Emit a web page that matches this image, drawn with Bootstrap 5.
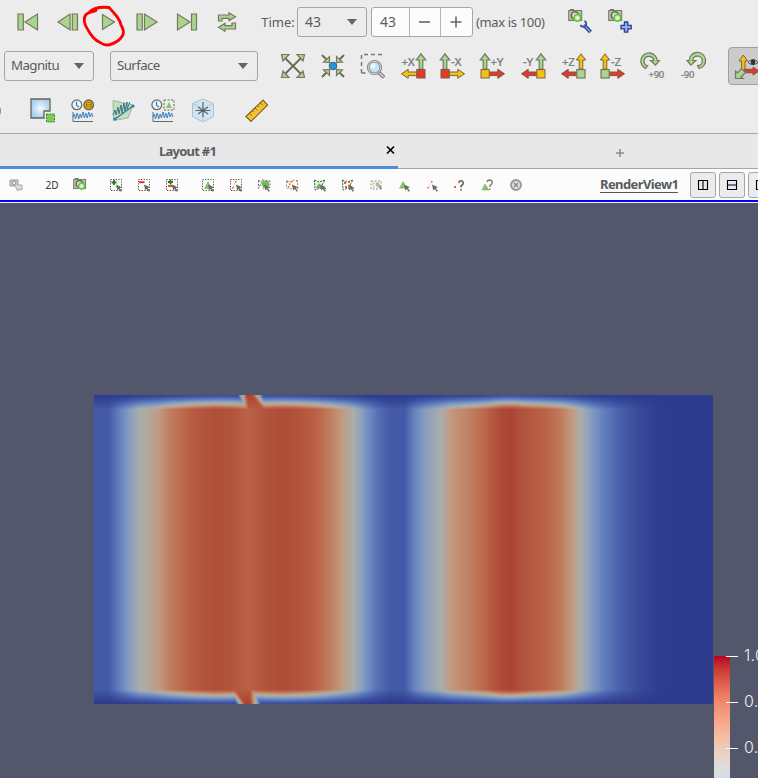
<!DOCTYPE html>
<html lang="en">
<head>
<meta charset="utf-8">
<title>Layout #1</title>
<link href="https://cdn.jsdelivr.net/npm/bootstrap@5.3.0/dist/css/bootstrap.min.css" rel="stylesheet">
<style>
body{font-family:"Noto Sans",sans-serif;font-size:13px;line-height:1;color:#585c5e;background:#ececec;width:758px;height:778px;overflow:hidden}
svg{display:block;flex:none;overflow:visible}
.tool-row{height:44px}
.row-tall{height:46px;border-bottom:1px solid #a6a6a6}
.slot{width:40px;flex:none;display:flex;justify-content:center;align-items:center}
.play .slot{width:39.8px}
.box{border:1px solid #a5a5a5;border-radius:3px;height:30px;flex:none;font-size:14px}
.combo{font-size:13.3px;letter-spacing:-.6px}
.spin{background:#fcfcfc}
.spin>*{height:100%}
.cell{border-left:1px solid #b5b5b5;width:31px}
.toggle{width:40px;height:38px;border:1px solid #a0a0a0;background:#cbcbcb;border-radius:4px 0 0 4px;flex:none}
.tabs{height:35px;background:#e8e8e8}
.tab1{width:398px;border-bottom:3px solid #4a90d9;font-size:13px;font-weight:700;color:#595d5f;letter-spacing:-.75px}
.tab2{border-bottom:1px solid #a6a6a6}
.views{height:31px;background:#fcfcfc}
.views .slot{width:28px}
.gap8{width:8px;flex:none}
.vbtn{width:26px;height:26px;border:1px solid #a6a6a6;border-radius:3px;background:#ececec;flex:none}
.active-line{height:3px;background:linear-gradient(#00f 0 2px,#f4f4f4 2px)}
.scene{height:575px;background:#52576c;padding-top:192px;overflow:hidden}
.scene canvas{margin-left:94px;flex:none}
.legend-bar{width:16px;height:122px;margin:261px 0 0 1px;flex:none;background:linear-gradient(#b40426 0,#c32d30 9px,#d65244 22px,#e8765c 36px,#f08a6c 46px,#f7a889 66px,#f5c1a9 84px,#ead3c6 98px,#dddddd 113px,#d5dbe5 122px)}
.legend-ticks{margin:255px 0 0 -4px;padding-top:6px;flex:none;font-family:Inter,"Liberation Sans",sans-serif;font-weight:300;color:#eee;font-size:16px;letter-spacing:.3px}
.tick{height:46px;align-items:flex-start}
.tick i{width:12px;height:1px;background:#fff;flex:none}
.tick span{margin:-9px 0 0 6px}
.mark-ring{position:absolute;left:0;top:0;pointer-events:none}
.g{fill:#a8d68f;stroke:#77775f;stroke-width:1.2}
.y{fill:#f8c00e;stroke:#77664a;stroke-width:1}
.r{fill:#e43a24;stroke:#77584c;stroke-width:1}
.n{fill:none;stroke:#6b6b58}
.dash{fill:none;stroke:#66665a;stroke-width:1;stroke-dasharray:2 1.5}
.ax{font:500 11.5px "Noto Sans",sans-serif;fill:#808080;stroke:#808080;stroke-width:.2;letter-spacing:-.3px}
.ax90{font-size:9.5px}
.rv{font-size:13px;letter-spacing:-.6px;border-bottom:1px solid #555;height:15px;margin-top:2px}
</style>
<script src="https://cdn.jsdelivr.net/npm/bootstrap@5.3.0/dist/js/bootstrap.bundle.min.js"></script>
</head>
<body class="position-relative">
<svg width="0" height="0" class="position-absolute"><defs>
<path id="up" d="M19.2 16V7H16.3L21 .8 25.7 7H22.8V16Z"/>
<path id="lf" d="M17 19H8.2V16.3L1.5 20.8 8.2 25.3V22.6H17Z"/>
<rect id="sq" x="16.8" y="16.6" width="8.2" height="8.4"/>
<path id="cur" d="M7 6.5 L13 9.3 10.8 10 13 13 11.8 13.8 9.7 11 8.2 12.4Z" fill="#66705c"/>
<path id="sel" fill="none" stroke="#4a4a42" stroke-dasharray="1.2 1.4" d="M1.5 1.5H12.5V12.5H1.5Z"/>
<g id="cam"><rect x=".7" y="1.5" width="13" height="10" fill="#b9bba4" stroke="#77776a"/><rect x="2" y="0" width="4" height="2" fill="#77776a"/><circle cx="7" cy="6.5" r="3.6" fill="#dddccc" stroke="#5c5c50" stroke-width="1.4"/><circle cx="9.4" cy="8.8" r="3.4" fill="#b9eba0" stroke="#62c436" stroke-width="1.5"/><path d="M8 8.8h3M9.5 7.4v3" stroke="#fff"/></g>
<path id="wave" d="M2 18l1.5-3 1 5 1.7-6 1.5 6 1.5-5 1.2 4 1.6-6 1.4 6 1.3-5 1.5 5 1.5-6 1.4 5 1.5-4 1.2 4" fill="none" stroke="#3684c4" stroke-width="1"/>
<g id="clock"><circle cx="5.8" cy="5.8" r="4.9" fill="#f3f7f8" stroke="#6b6b60" stroke-width="1.3"/><path d="M5.5 2.5v3.5l2.3 2.3" fill="none" stroke="#3684c4" stroke-width="1.3"/></g>
</defs></svg>

<div class="tool-row d-flex align-items-center">
 <div class="d-flex play" style="margin-left:8px">
  <div class="slot"><svg width="22" height="18"><path class="g" d="M1 1H6.3V17H1ZM20.5 1V17L8 9Z"/></svg></div>
  <div class="slot"><svg width="22" height="18"><path class="g" d="M13 1V17L1 9ZM15.3 1H20.5V17H15.3Z"/></svg></div>
  <div class="slot"><svg width="10" height="18"><path class="g" d="M.5 1.5V16.5L12.5 9Z"/></svg></div>
  <div class="slot"><svg width="22" height="18"><path class="g" d="M1 1H6.3V17H1ZM8.5 1V17L21 9Z"/></svg></div>
  <div class="slot"><svg width="20" height="18"><path class="g" d="M.5 1V17L13 9ZM14.5 1H19.5V17H14.5Z"/></svg></div>
  <div class="slot"><svg width="20" height="20"><path class="g" d="M1.5 9V3H12V.8L18.5 4.8 12 8.6V6.3H5V9ZM18.5 11V17H8V19.2L1.5 15.2 8 11.4V13.7H15V11Z"/></svg></div>
 </div>
 <span style="margin-left:14.5px;width:35.7px" class="flex-shrink-0">Time:</span>
 <div class="box d-flex align-items-center justify-content-between" style="width:70px;padding:0 9px 0 7px;margin-right:4px">43 <svg width="10" height="6"><path d="M0 0H10L5 6Z" fill="#656565"/></svg></div>
 <div class="box spin d-flex align-items-center" style="width:102px"><div class="d-flex align-items-center ps-2" style="width:37px">43</div>
  <div class="cell d-flex align-items-center justify-content-center"><svg width="11" height="12"><path d="M0 6H11" stroke="#666" stroke-width="1.6"/></svg></div>
  <div class="cell d-flex align-items-center justify-content-center"><svg width="12" height="12"><path d="M.5 6H11.5M6 .5V11.5" stroke="#666" stroke-width="1.6"/></svg></div></div>
 <span style="margin-left:3px;width:92px;letter-spacing:-.35px" class="flex-shrink-0 text-nowrap">(max is 100)</span>
 <svg width="26" height="26" style="margin-right:14px"><use href="#cam"/><path d="M16 16l6.5 7" stroke="#27408b" stroke-width="4"/><path d="M16 16l6.3 6.8" stroke="#7c9ce0" stroke-width="1.5"/><path d="M16.5 12a3 3 0 1 1-4 4" fill="none" stroke="#3c58a5" stroke-width="2"/></svg>
 <svg width="26" height="26"><use href="#cam"/><path d="M16.4 13h3.4v3.3h3.4v3.5h-3.4v3.3h-3.4v-3.3H13v-3.5h3.4Z" fill="#90aff0" stroke="#263f90" stroke-width="1.3"/></svg>
</div>

<div class="tool-row d-flex align-items-center">
 <div class="box combo d-flex align-items-center justify-content-between" style="width:90px;margin-left:4px;padding:0 9px 0 6px">Magnitu <svg width="10" height="6"><path d="M0 0H10L5 6Z" fill="#656565"/></svg></div>
 <div class="box combo d-flex align-items-center justify-content-between" style="width:148px;margin-left:16px;padding:0 9px 0 6px">Surface <svg width="10" height="6"><path d="M0 0H10L5 6Z" fill="#656565"/></svg></div>
 <div class="d-flex" style="margin-left:15px">
  <div class="slot"><svg width="26" height="26"><path d="M4 4L22 22M22 4L4 22" stroke="#6b6b50" stroke-width="1.8"/><path class="g" d="M1.5 1.5h7.5l-6 6.5ZM24.5 1.5h-7.5l6 6.5ZM1.5 24.5h7.5l-6-6.5ZM24.5 24.5h-7.5l6-6.5Z"/></svg></div>
  <div class="slot"><svg width="26" height="26"><path d="M2 2L8 8M24 2L18 8M2 24L8 18M24 24L18 18" stroke="#6b6b50" stroke-width="2"/><path class="g" d="M9.5 9.5V3.5L3.5 9ZM16.5 9.5V3.5L22.5 9ZM9.5 16.5V22.5L3.5 17ZM16.5 16.5V22.5L22.5 17Z"/><circle cx="13" cy="13" r="3.8" fill="#2196dc" stroke="#38617a"/></svg></div>
  <div class="slot"><svg width="26" height="26"><path d="M1.5 20V1.5H21V5M1.5 20H6" fill="none" stroke="#77776d" stroke-width="1.5" stroke-dasharray="4 3"/><path d="M18 18.5l6 6" stroke="#777" stroke-width="3.8"/><path d="M18.5 19l5 5" stroke="#ddd" stroke-width="1.5"/><circle cx="14.5" cy="14.5" r="6.3" fill="#c1e5f8" stroke="#858585" stroke-width="2.6"/><circle cx="14.5" cy="14.5" r="6.2" fill="none" stroke="#ddd" stroke-width=".9"/><circle cx="13" cy="12.8" r="2.5" fill="#e8f8ff"/></svg></div>
  <div class="slot"><svg width="26" height="26"><use href="#up" class="g"/><use href="#lf" class="y"/><use href="#sq" class="r"/><text class="ax" x="1.5" y="13">+X</text></svg></div>
  <div class="slot"><svg width="26" height="26"><g transform="matrix(-1 0 0 1 26 0)"><use href="#up" class="g"/><use href="#lf" class="y"/><use href="#sq" class="r"/></g><text class="ax" x="11" y="13">-X</text></svg></div>
  <div class="slot"><svg width="26" height="26"><g transform="matrix(-1 0 0 1 26 0)"><use href="#up" class="g"/><use href="#lf" class="r"/><use href="#sq" class="y"/></g><text class="ax" x="10.5" y="13">+Y</text></svg></div>
  <div class="slot"><svg width="26" height="26"><use href="#up" class="g"/><use href="#lf" class="r"/><use href="#sq" class="y"/><text class="ax" x="3" y="13">-Y</text></svg></div>
  <div class="slot"><svg width="26" height="26"><use href="#up" class="y"/><use href="#lf" class="r"/><use href="#sq" class="g"/><text class="ax" x="2" y="13">+Z</text></svg></div>
  <div class="slot"><svg width="26" height="26"><g transform="matrix(-1 0 0 1 26 0)"><use href="#up" class="y"/><use href="#lf" class="r"/><use href="#sq" class="g"/></g><text class="ax" x="11" y="13">-Z</text></svg></div>
  <div class="slot"><svg width="26" height="26"><path class="g" d="M5.5 15.5A8.2 8.2 0 1 1 17.2 7.5H19.4L15.5 12.2 10.5 7.5H13.7A4.8 4.8 0 1 0 7.7 12.9Z"/><text class="ax ax90" x="8.5" y="25.3">+90</text></svg></div>
  <div class="slot"><svg width="26" height="26"><path class="g" d="M19 15.5A8.2 8.2 0 1 0 9.2 7.5H7L10.9 12.2 15.9 7.5H12.7A4.8 4.8 0 1 1 17.5 12.7Z"/><text class="ax ax90" x="1" y="25.3">-90</text></svg></div>
 </div>
 <div class="toggle" style="margin-left:15px;padding:6px 0 0 5px"><svg width="28" height="26"><path class="y" d="M7.6 17V7H5L9.3 1 13.6 7H11V17Z"/><path class="r" d="M10 15.3H19V13L25 17 19 21V18.7H10Z"/><path class="g" d="M7.5 14.5L11.5 18.5 7 23 9 24.5H1.5V17L3.5 19Z"/><path d="M14 8.3Q19 3 24 8.3 19 13 14 8.3Z" fill="#f4f4f4" stroke="#444"/><circle cx="19" cy="8" r="2.5" fill="#333"/></svg></div>
</div>

<div class="row-tall d-flex align-items-center">
 <svg width="2" height="10"><path d="M0 1Q2 5 0 9Z" fill="#888"/></svg>
 <div class="d-flex" style="margin-left:21px">
  <div class="slot"><svg width="26" height="26"><defs><radialGradient id="bl"><stop stop-color="#f3faff"/><stop offset="1" stop-color="#a9cfee"/></radialGradient></defs><path d="M1 1H20V13H14V20H1Z" fill="url(#bl)" stroke="#66665a" stroke-width="1.3"/><rect x="16.5" y="16" width="8" height="8" fill="#78cf50" stroke="#4b8135" stroke-dasharray="2 1"/></svg></div>
  <div class="slot"><svg width="26" height="26"><g transform="translate(1 1)"><use href="#clock"/><circle cx="17.7" cy="5.8" r="4.8" fill="#eeb522" stroke="#6b6046" stroke-width="1.3"/><path d="M15.2 3.5h5v4.5h-5ZM15 5.8h5.4" fill="none" stroke="#94690e" stroke-width=".9"/><path d="M2 13V22.5H22" class="n"/><use href="#wave"/></g></svg></div>
  <div class="slot"><svg width="26" height="26"><path d="M3 2.5L23 7 18 20 3.5 22.5Z" fill="#c0dfba" stroke="#9cb992"/><path d="M5 21L23 8" stroke="#3b7198" stroke-width="1.3"/><path d="M3 17l2-5 1 5 2-8 1 7 2-9 1 8 2-10 1 8 2-9 0 7 3-7" fill="none" stroke="#397787" stroke-width="1"/><circle cx="5" cy="21" r="1.6" fill="#247ec4"/><circle cx="23" cy="8" r="1.6" fill="#247ec4"/></svg></div>
  <div class="slot"><svg width="26" height="26"><g transform="translate(1 1)"><use href="#clock"/><rect class="dash" x="13" y="1" width="10" height="10"/><path d="M18 3l3 6h-6Z" fill="#83c765"/><path d="M2 13V22.5H22" class="n"/><use href="#wave"/></g></svg></div>
  <div class="slot"><svg width="26" height="26"><path d="M13 1L23.5 5.5V18.5L13 24 2.5 18.5V5.5Z" fill="#d2e4f1" stroke="#a7c1d3"/><path d="M2.5 5.5L13 10.5 23.5 5.5M13 11V24" fill="none" stroke="#b5cad9"/><path d="M13 4V19M5.5 12.5H20.5M8 16L18 9M8 9L18 16" stroke="#56666c" stroke-width="1.2"/></svg></div>
 </div>
 <svg width="26" height="26" style="margin-left:21px"><path d="M2 18.5L19 2 23.5 7 7 23.5Z" fill="#f5c32c" stroke="#80652a" stroke-width="1.2"/><path d="M5.5 15.3l2.3 2.3M8.3 12.5l1.6 1.6M11 10l2.3 2.3M13.7 7.5l1.6 1.6M16.3 4.9l2.3 2.3" stroke="#80652a"/></svg>
</div>

<div class="tabs d-flex">
 <div class="tab1 d-flex align-items-center flex-shrink-0"><span style="margin-left:159px;width:227px;padding-top:3px">Layout #1</span><svg width="9" height="8"><path d="M1 .5L8 7.5M8 .5L1 7.5" stroke="#000" stroke-width="1.6"/></svg></div>
 <div class="tab2 flex-grow-1 d-flex justify-content-center align-items-center"><svg width="8" height="8" style="margin-left:84px;margin-top:3px"><path d="M0 4H8M4 0V8" stroke="#8a8a8a" stroke-width="1.5"/></svg></div>
</div>

<div class="views d-flex align-items-center">
 <div class="slot" style="margin-left:2px"><svg width="14" height="14"><path d="M1 2h8v6H1Z" fill="#ccc" stroke="#999"/><circle cx="5" cy="5" r="1.8" fill="#eee" stroke="#999"/><path d="M6 8l3 5 1-2 3 1V7H9" fill="#ddd" stroke="#aaa"/></svg></div>
 <div class="gap8"></div>
 <div class="slot" style="font-size:10px;color:#333">2D</div>
 <div class="slot"><svg width="14" height="14"><g transform="scale(.92)"><use href="#cam"/></g></svg></div>
 <div class="gap8"></div>
 <div class="slot"><svg width="14" height="14"><use href="#sel"/><use href="#cur"/><path d="M5 2v5M2.5 4.5h5" stroke="#257a18" stroke-width="1.8"/></svg></div>
 <div class="slot"><svg width="14" height="14"><use href="#sel"/><use href="#cur"/><path d="M2 4.2h5.5" stroke="#f02020" stroke-width="1.8"/></svg></div>
 <div class="slot"><svg width="14" height="14"><use href="#sel"/><use href="#cur"/><path d="M5.5 1.5v5M3 4h5" stroke="#257a18" stroke-width="1.8"/><path d="M3 8h5" stroke="#f02020" stroke-width="1.7"/></svg></div>
 <div class="gap8"></div>
 <div class="slot"><svg width="14" height="14"><use href="#sel"/><path d="M7 3l4 8H3Z" fill="#85c268"/><use href="#cur"/></svg></div>
 <div class="slot"><svg width="14" height="14"><use href="#sel"/><path d="M6.5 4L3.5 10" stroke="#f4c8b8"/><path d="M6 3h1.5v1.5H6ZM3 9h1.5v1.5H3ZM10 8h1.5v1.5H10Z" fill="#f05a30"/><use href="#cur"/></svg></div>
 <div class="slot"><svg width="14" height="14"><path class="dash" d="M1.5 2.5L5 3.5 1.5 10.5ZM5 2L13 3V9.5L6 11"/><path d="M4 4l4-1.5 4 1v5l-6 1.5Z" fill="#74bb57"/><use href="#cur"/></svg></div>
 <div class="slot"><svg width="14" height="14"><path class="dash" opacity=".7" d="M1.5 2.5L5 4 8 2 12.5 3V10L6 11 1.5 10Z"/><path d="M2 3h1.5v1.5H2ZM6 3h1.5v1.5H6ZM11 2h1.5v1.5H11ZM3 8h1.5v1.5H3ZM7 7h1.5v1.5H7ZM12 9h1.5v1.5H12ZM4 5.5h1.5V7H4Z" fill="#f05a30"/><use href="#cur"/></svg></div>
 <div class="slot"><svg width="14" height="14"><path d="M1.5 2L6 4 12 2 9 7 13 11 7 10 2 12Z" fill="#e4f1dd" stroke="#355c35" stroke-dasharray="2 1"/><path d="M6 5l3 5H3Z" fill="#74ad60"/><use href="#cur"/></svg></div>
 <div class="slot"><svg width="14" height="14"><path d="M1.5 2L6 4 12 2 9 7 13 11 7 10 2 12Z" fill="none" stroke="#355c35" stroke-dasharray="2 1"/><path d="M3 4h2v2H3ZM7 3h2v2H7ZM4 8h2v2H4ZM8 7h2v2H8Z" fill="#f05a30"/><use href="#cur"/></svg></div>
 <div class="slot"><svg width="14" height="14"><path class="dash" opacity=".7" d="M2 3H12V11H2Z"/><path class="dash" opacity=".5" d="M4 5H10V9H4Z"/><circle cx="8.5" cy="6.5" r="2" fill="#9bc78a"/><path d="M10 8l2.5 3" stroke="#777" stroke-width="1.3"/></svg></div>
 <div class="slot"><svg width="14" height="14"><path d="M6 3l4.5 7.5H2Z" fill="#85c268"/><use href="#cur"/></svg></div>
 <div class="slot"><svg width="14" height="14"><path d="M6.5 4L3 10" stroke="#f4d8cc"/><path d="M6 3h1.5v1.5H6ZM2.5 9H4v1.5H2.5ZM9.5 8H11v1.5H9.5Z" fill="#f05a30"/><use href="#cur"/></svg></div>
 <div class="slot"><svg width="14" height="14"><path d="M1 8h2v2H1Z" fill="#f05a30"/><path d="M6 5Q6 2.8 8 2.8T10.3 5Q10.3 6.5 8 8V9.5M8 11V12.5" fill="none" stroke="#66665c" stroke-width="1.6"/></svg></div>
 <div class="slot"><svg width="14" height="14"><path d="M4 6l4 6H1Z" fill="#83c765" stroke="#78a763" stroke-width=".5"/><path d="M6 4Q6.5 2 8.7 2T11.3 4.3Q11.3 6 9 7.5V9M9 10.5V12" fill="none" stroke="#77776d" stroke-width="1.3"/></svg></div>
 <div class="slot"><svg width="14" height="14"><circle cx="7" cy="7" r="5" fill="#ddd" stroke="#999" stroke-width="1.9"/><path d="M5 5l4 4M9 5L5 9" stroke="#888" stroke-width="1.3"/></svg></div>
 <strong class="rv flex-shrink-0" style="margin-left:70px;width:78px">RenderView1</strong>
 <div class="vbtn d-flex align-items-center justify-content-center" style="margin:0 3px 0 12px"><svg width="10" height="10"><path d="M.5 .5H9.5V9.5H.5ZM5 .5V9.5" fill="#e4e9f5" stroke="#000" stroke-width="1.1"/></svg></div>
 <div class="vbtn d-flex align-items-center justify-content-center"><svg width="10" height="10"><path d="M.5 .5H9.5V9.5H.5ZM.5 5H9.5" fill="#e4e9f5" stroke="#000" stroke-width="1.1"/></svg></div>
 <div class="vbtn d-flex align-items-center justify-content-center" style="margin-left:3px"><svg width="10" height="10"><path d="M.5 .5H9.5V9.5H.5Z" fill="#e4e9f5" stroke="#000" stroke-width="1.1"/></svg></div>
</div>
<div class="active-line"></div>

<div class="scene d-flex align-items-start">
 <canvas id="field" width="619" height="309"></canvas>
 <div class="legend-bar"></div>
 <div class="legend-ticks">
  <div class="tick d-flex"><i></i><span>1.0</span></div>
  <div class="tick d-flex"><i></i><span>0.8</span></div>
  <div class="tick d-flex"><i></i><span>0.6</span></div>
 </div>
</div>
<svg class="mark-ring" width="140" height="50"><path d="M89 12.5C93 8 101 6.7 109 7.5 115 14 120 19 121 25 125 32 124 35 119 40 112 45 106 47 101 43 94 40 91 35 88 30 84 25 83 18 86 14.5 89 11.5 94 11.5 96 10.5" fill="none" stroke="#f00" stroke-width="2.8" stroke-linecap="round"/></svg>

<script>
// Scalar field: horizontal profile damped to zero in thin wall layers.
const profile=[[0,.13],[14,.13],[29,.31],[46,.5],[61,.57],[76,.7],[101,.84],[121,.91],[136,.88],[154,.79],[171,.88],[188,.92],[206,.87],[224,.78],[241,.65],[253,.55],[261,.48],[271,.34],[284,.2],[296,.13],[310,.13],[321,.29],[331,.38],[347,.5],[356,.6],[376,.69],[391,.78],[406,.93],[417,.96],[431,.87],[451,.79],[466,.71],[478,.59],[486,.5],[496,.38],[509,.26],[526,.15],[546,.06],[566,.01],[619,0]];
const ramp=[[0,46,58,140],[.13,68,90,168],[.3,108,138,194],[.4,143,161,189],[.5,170,174,168],[.6,194,153,128],[.7,192,124,94],[.8,186,96,70],[.9,176,80,58],[1,168,60,48]];
function lerp(tab,x){x=Math.max(tab[0][0],Math.min(tab[tab.length-1][0],x));
 let i=1;while(i<tab.length-1&&tab[i][0]<x)i++;
 const a=tab[i-1],b=tab[i],t=(x-a[0])/(b[0]-a[0]);return a.slice(1).map((v,k)=>v+(b[k+1]-v)*t);}
const cv=document.getElementById('field'),cx=cv.getContext('2d'),im=cx.createImageData(619,309);
const L=14,clamp=v=>Math.max(0,Math.min(1,v));
for(let y=0;y<309;y++)for(let x=0;x<619;x++){
 const top=y<154,d=top?y:308-y,t=clamp(d/L);
 let v=lerp(profile,x)[0];
 if(t<1){
  v*=.1*v+(1-.1*v)*Math.pow(t,1.15);
  // hot spot crossing the wall layer at a slant
  const l=top?143+10*t:141-2*t,r=top?169+t:167-10*t;
  const k=clamp(Math.min((x-l)/(10-8*t),(r-x)/(12-10*t)));
  v=v+(.97-.14*t-v)*k;
 }
 const c=lerp(ramp,v),o=(y*619+x)*4;
 im.data[o]=c[0];im.data[o+1]=c[1];im.data[o+2]=c[2];im.data[o+3]=255;
}
cx.putImageData(im,0,0);
</script>
</body>
</html>
